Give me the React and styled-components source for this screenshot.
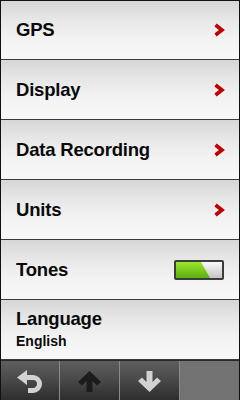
import React from "react";
import styled, { createGlobalStyle } from "styled-components";

const Global = createGlobalStyle`
  html, body { margin: 0; padding: 0; background: #000; }
  body { font-family: "Liberation Sans", Arial, sans-serif; }
`;

const Screen = styled.div`
  width: 240px;
  height: 400px;
  box-sizing: border-box;
  border: 1px solid #111;
  border-bottom: none;
  display: flex;
  flex-direction: column;
  background: #000;
  overflow: hidden;
`;

const List = styled.div`
  display: flex;
  flex-direction: column;
`;

const Row = styled.div`
  height: 60px;
  box-sizing: border-box;
  border-bottom: 1px solid #3a3a3a;
  background: linear-gradient(#d6d6d6 0%, #e6e6e6 30%, #f3f3f3 65%, #f8f8f8 100%);
  display: flex;
  align-items: center;
  justify-content: space-between;
  padding: 0 14px 0 15px;
  &:first-child { height: 59px; }
`;

const Label = styled.div`
  font-size: 18.5px;
  font-weight: bold;
  color: #0a0a0a;
  letter-spacing: -0.2px;
`;

const Stack = styled.div`
  display: flex;
  flex-direction: column;
  gap: 3px;
  margin-top: -2px;
`;

const Sub = styled.div`
  font-size: 14px;
  font-weight: bold;
  color: #0a0a0a;
`;

const Toolbar = styled.div`
  height: 41px;
  box-sizing: border-box;
  border-top: 1px solid #2a2a2a;
  display: grid;
  grid-template-columns: 59px 60px 60px 1fr;
`;

const ToolButton = styled.div`
  background: linear-gradient(#5e5e5e 0%, #484848 50%, #2e2e2e 100%);
  border-right: 1px solid #8a8a8a;
  display: flex;
  align-items: center;
  justify-content: center;
  padding-top: 2px;
`;

const ToolBlank = styled.div`
  background: #727272;
`;

const Chevron = () => (
  <svg width="12" height="14" viewBox="0 0 12 14">
    <polyline points="2.5,2 9,7 2.5,12" fill="none" stroke="#c00000" strokeWidth="3.6" strokeLinejoin="miter" />
  </svg>
);

const Toggle = () => (
  <svg width="52" height="22" viewBox="0 0 52 22">
    <defs>
      <linearGradient id="g" x1="0" y1="0" x2="0" y2="1">
        <stop offset="0" stopColor="#9be62a" />
        <stop offset="1" stopColor="#5cae12" />
      </linearGradient>
      <linearGradient id="w" x1="0" y1="0" x2="0" y2="1">
        <stop offset="0" stopColor="#fafafa" />
        <stop offset="1" stopColor="#c4c4c4" />
      </linearGradient>
    </defs>
    <rect x="1" y="1" width="50" height="20" rx="2" fill="#3c3c3c" />
    <rect x="3" y="3" width="46" height="16" fill="url(#w)" />
    <polygon points="3,3 28,3 37,19 3,19" fill="url(#g)" />
  </svg>
);

const BackIcon = () => (
  <svg width="28" height="26" viewBox="0 0 28 26">
    <path d="M12 21.5 H17 A6.5 6.5 0 0 0 17 8.5 H8" fill="none" stroke="#d2d2d2" strokeWidth="5" />
    <polygon points="1,8.5 11,1 11,16" fill="#d2d2d2" />
  </svg>
);

const UpIcon = ({ color }) => (
  <svg width="25" height="21" viewBox="0 0 25 21">
    <path d="M12.5 0 L24 11 L20 14.5 L15.5 10 L15.5 21 L9.5 21 L9.5 10 L5 14.5 L1 11 Z" fill={color} />
  </svg>
);

const DownIcon = ({ color }) => (
  <svg width="25" height="21" viewBox="0 0 25 21">
    <path d="M12.5 21 L24 10 L20 6.5 L15.5 11 L15.5 0 L9.5 0 L9.5 11 L5 6.5 L1 10 Z" fill={color} />
  </svg>
);

const items = [
  { label: "GPS" },
  { label: "Display" },
  { label: "Data Recording" },
  { label: "Units" },
];

export default function App() {
  return (
    <>
      <Global />
      <Screen>
        <List>
          {items.map((it) => (
            <Row key={it.label}>
              <Label>{it.label}</Label>
              <Chevron />
            </Row>
          ))}
          <Row>
            <Label>Tones</Label>
            <Toggle />
          </Row>
          <Row>
            <Stack>
              <Label>Language</Label>
              <Sub>English</Sub>
            </Stack>
          </Row>
        </List>
        <Toolbar>
          <ToolButton><BackIcon /></ToolButton>
          <ToolButton><UpIcon color="#1c1c1c" /></ToolButton>
          <ToolButton><DownIcon color="#d2d2d2" /></ToolButton>
          <ToolBlank />
        </Toolbar>
      </Screen>
    </>
  );
}
